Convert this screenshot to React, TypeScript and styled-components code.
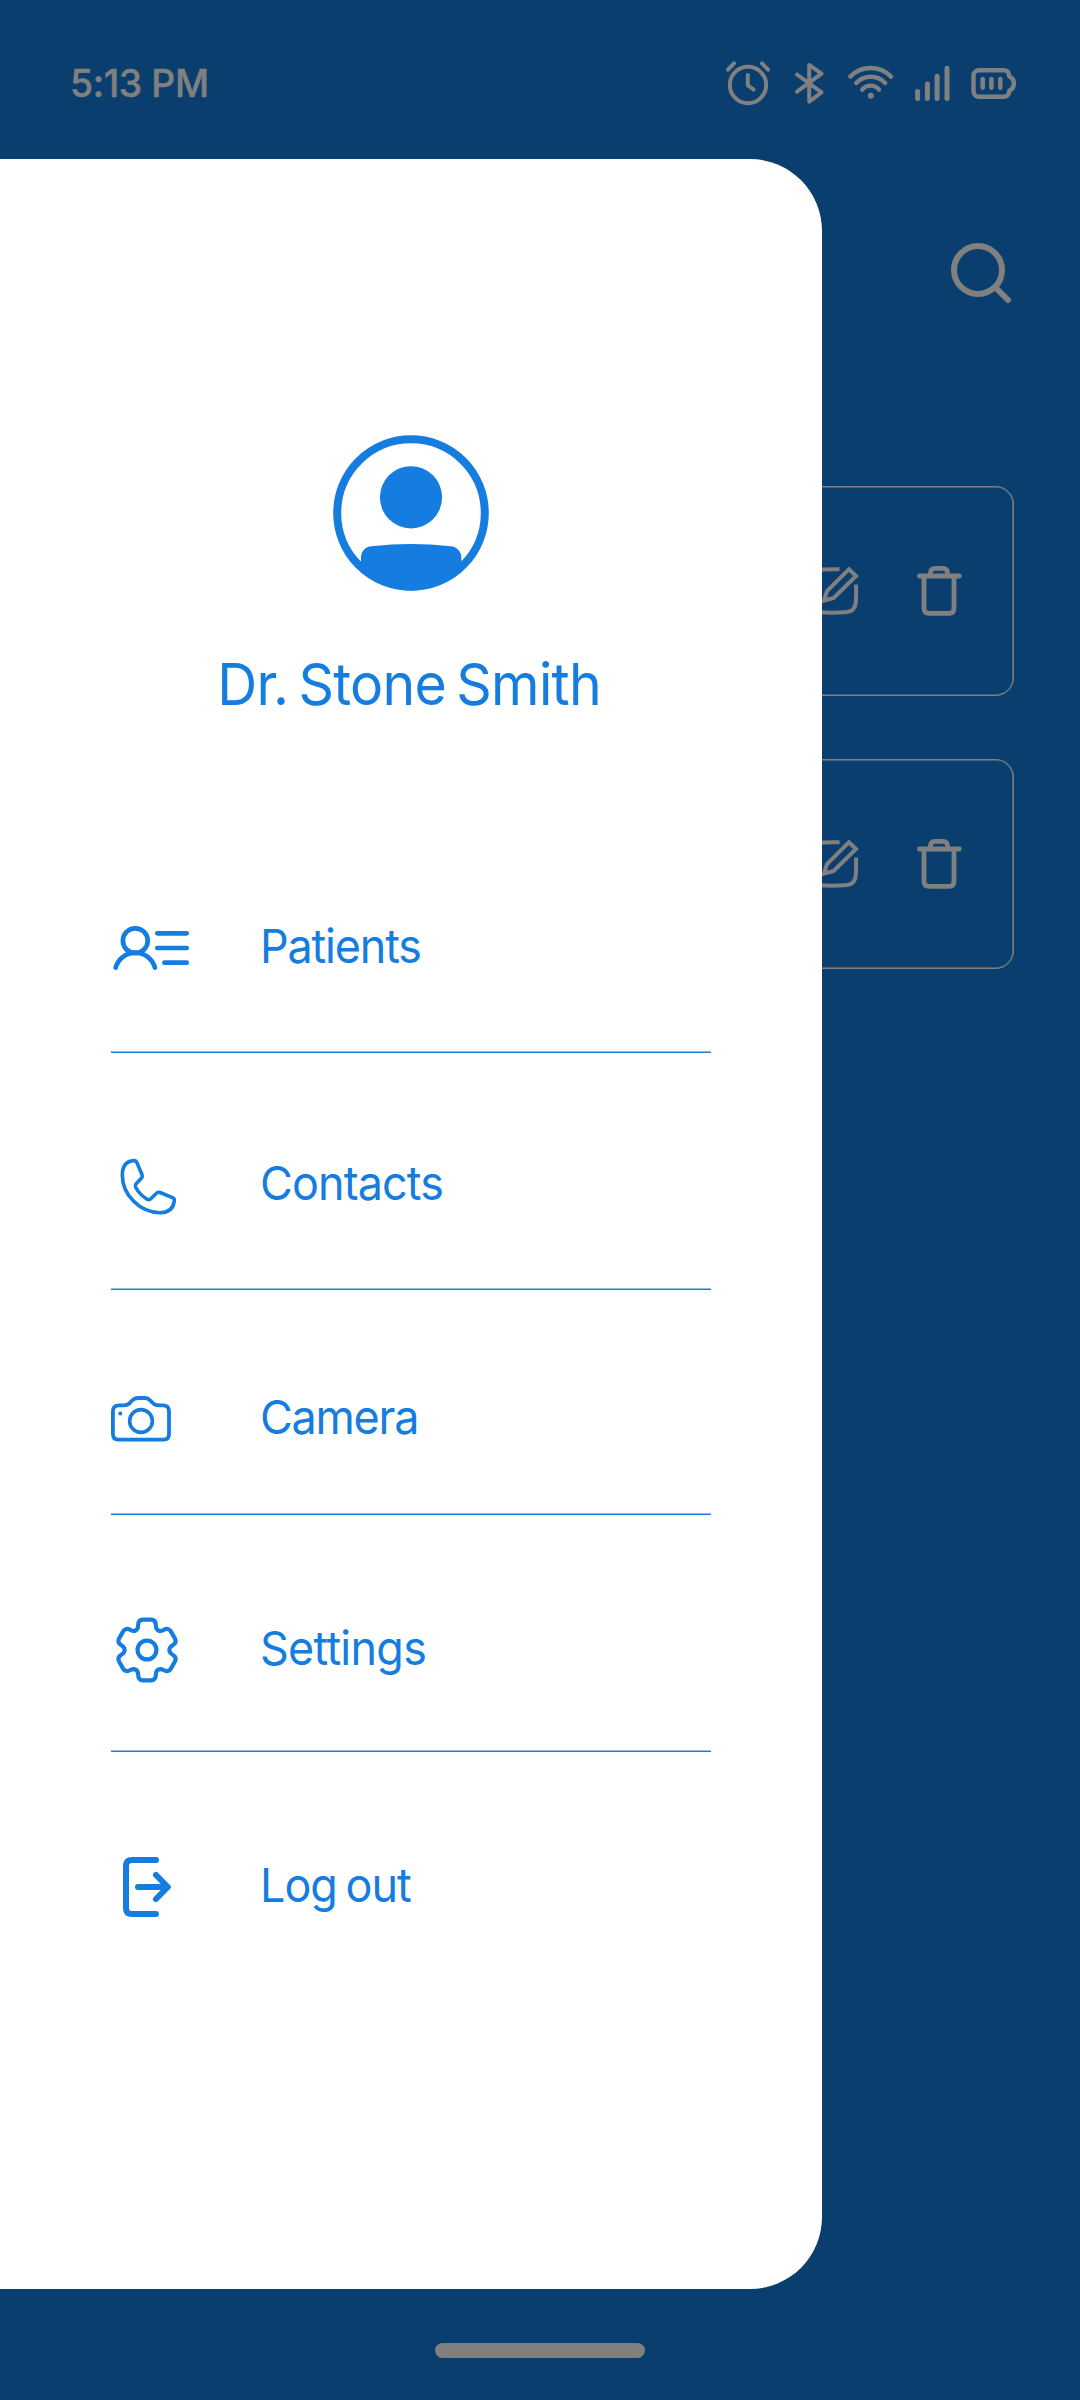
import React from "react";
import styled, { createGlobalStyle } from "styled-components";

const BLUE = "#157ce0";
const NAVY = "#0a3e6e";
const MUTED = "#808080";

const GlobalStyle = createGlobalStyle`
  * { box-sizing: border-box; }
  body { margin: 0; background: ${NAVY}; font-family: Inter, "Liberation Sans", sans-serif; }
`;

const Screen = styled.div`
  width: 1080px;
  height: 2400px;
  display: flex;
  flex-direction: column;
  background: ${NAVY};
  color: ${MUTED};
  overflow: hidden;
`;

const StatusBar = styled.header`
  height: 159px;
  padding: 59px 64px 0 70px;
  display: flex;
  justify-content: space-between;
  align-items: flex-start;
`;

const Clock = styled.time`
  font-size: 38.5px;
  font-weight: 500;
  line-height: 48px;
  letter-spacing: -0.4px;
  transform: scaleX(0.97);
  transform-origin: left;
  -webkit-text-stroke: 0.5px currentColor;
`;

const StatusIcons = styled.div`
  display: flex;
  gap: 13px;
`;

const Icon = styled.svg<{ $size: number; $stroke?: number }>`
  display: block;
  flex: none;
  width: ${(p) => p.$size}px;
  height: ${(p) => p.$size}px;
  overflow: visible;
  fill: none;
  stroke: currentColor;
  stroke-width: ${(p) => p.$stroke ?? 4};
  stroke-linecap: round;
  stroke-linejoin: round;
`;

const Main = styled.main`
  position: relative;
  flex: 1;
  padding: 81px 66px 0;
`;

const Toolbar = styled.div`
  display: flex;
  justify-content: flex-end;
  height: 246px;
`;

const CardList = styled.div`
  display: flex;
  flex-direction: column;
  gap: 63px;
`;

const Card = styled.article`
  height: 210px;
  padding-right: 44px;
  display: flex;
  align-items: center;
  justify-content: flex-end;
  gap: 47px;
  border: 1px solid ${MUTED};
  border-radius: 18px;
  box-shadow: inset 0 0 0 0.6px ${MUTED};
`;

const Drawer = styled.aside`
  position: absolute;
  inset: 0 auto 0 0;
  width: 822px;
  padding-top: 274px;
  background: #fff;
  color: ${BLUE};
  border-radius: 0 72px 72px 0;
`;

const Profile = styled.div`
  display: flex;
  flex-direction: column;
  align-items: center;
  gap: 56px;
  margin-bottom: 182px;
`;

const Name = styled.h1`
  margin: 0;
  padding-right: 5px;
  font-size: 58px;
  font-weight: 400;
  line-height: 70px;
  letter-spacing: -0.75px;
  word-spacing: -5px;
  white-space: nowrap;
  transform: scaleX(0.955);
`;

const Menu = styled.nav`
  width: 600px;
  margin-left: 111px;
`;

const MenuItem = styled.a<{ $top: number; $bottom: number }>`
  display: flex;
  align-items: center;
  gap: 59px;
  padding: ${(p) => p.$top}px 0 ${(p) => p.$bottom}px;
`;

const Divider = styled.hr`
  margin: 0;
  height: 2px;
  border: 0;
  border-top: 1px solid #8abdf0;
  border-bottom: 1px solid ${BLUE};
`;

const Label = styled.span<{ $spacing: number }>`
  font-size: 47px;
  line-height: 60px;
  letter-spacing: ${(p) => p.$spacing}px;
  word-spacing: -3px;
  white-space: nowrap;
  transform: scaleX(0.955);
  transform-origin: left;
`;

const NavBar = styled.footer`
  height: 111px;
  padding-top: 54px;
  display: flex;
  justify-content: center;
`;

const HomeIndicator = styled.div`
  width: 210px;
  height: 15px;
  border-radius: 8px;
  background: ${MUTED};
`;

const AlarmIcon = () => (
  <Icon $size={48} viewBox="724 59 48 48">
    <circle cx="748" cy="85" r="18.2" />
    <path d="M747.8 75V85.3L753.5 89.5M728 69.7L734 63.3M762 63.3L768 69.7" />
  </Icon>
);

const BluetoothIcon = () => (
  <Icon $size={48} viewBox="785 59 48 48">
    <path d="M797 74.5L821.6 92.3L809.2 101.6V65L821.6 73.7L797 91.7" />
  </Icon>
);

const WifiIcon = () => (
  <Icon $size={48} $stroke={4.4} viewBox="846 59 48 48">
    <path d="M850.3 76.6A28.5 28.5 0 0 1 891 76.6M856.2 83A20 20 0 0 1 885.2 83M862.2 89.6A10.8 10.8 0 0 1 879 89.6" />
    <circle cx="870.8" cy="95.7" r="3" fill="currentColor" stroke="none" />
  </Icon>
);

const SignalIcon = () => (
  <Icon $size={48} $stroke={5} viewBox="907 59 48 48">
    <path d="M917.6 91.6V98.4M927.4 83.9V98.4M937.1 76.3V98.4M947 68.3V98.4" />
  </Icon>
);

const BatteryIcon = () => (
  <Icon $size={48} $stroke={4.5} viewBox="968 59 48 48">
    <path d="M979 70.2h25a5 5 0 0 1 5 5c0 1.3 1 1.8 2 2.3c2 1 2.8 2.5 2.8 6s-.8 5-2.8 6c-1 .5-2 1-2 2.3a5 5 0 0 1-5 5h-25a5.5 5.5 0 0 1-5.5-5.5v-15.6a5.5 5.5 0 0 1 5.5-5.5z" />
    <path d="M982.7 79V87.8M991.4 79V87.8M1000.3 79V87.8" />
  </Icon>
);

const SearchIcon = () => (
  <Icon $size={66} $stroke={6} viewBox="948 240 66 66">
    <circle cx="978" cy="270" r="24" />
    <path d="M995.5 287.5L1008 300" />
  </Icon>
);

const EditIcon = () => (
  <Icon $size={60} viewBox="802 561 60 60">
    <path
      d="M839.5 569.3Q824 569 817 570.3Q809.5 571.5 808.6 580Q808 591 808.6 602Q809.5 611 817 612Q832 613.3 847 612Q855 611 855.8 602.5Q856.5 593 856 584.5"
      strokeLinecap="butt"
    />
    <path d="M824 600.6L827 591L849 569.2L856 576L833.7 598Z" strokeLinejoin="miter" />
  </Icon>
);

const TrashIcon = () => (
  <Icon $size={60} $stroke={4.8} viewBox="909 561 60 60">
    <path d="M919.4 576H959.3M924 577V608.3Q924 613.3 929 613.3H949Q954 613.3 954 608.3V577M930.4 575.5V573.5Q930.4 568.4 935 568.4H943Q947.6 568.4 947.6 573.5V575.5" />
  </Icon>
);

const AvatarIcon = () => (
  <Icon $size={160} viewBox="331 433 160 160">
    <circle cx="411" cy="513" r="73.8" strokeWidth="8" />
    <g fill="currentColor" stroke="none">
      <circle cx="411" cy="497.3" r="31.1" />
      <path d="M361 557.5C361 551 365.5 546.7 371.5 546.2Q411 541.8 450.5 546.2C456.5 546.7 461.3 551 461.3 557.5V572A77.5 77.5 0 0 1 361 572Z" />
    </g>
  </Icon>
);

const PatientsIcon = () => (
  <Icon $size={90} $stroke={4.7} viewBox="111 901 90 90">
    <circle cx="135.3" cy="940.7" r="12.4" />
    <path d="M115.7 967.7A20.3 20.3 0 0 1 154.9 967.7M157.3 933.3H186.7M157.3 948H186.7M164.4 962.7H186.7" />
  </Icon>
);

const PhoneIcon = () => (
  <Icon $size={90} $stroke={3.6} viewBox="111 1138 90 90">
    <path d="M122.3 1175C122.3 1165.5 127 1161 134 1160.6Q136 1160.5 136.6 1162L142 1174.5Q142.8 1176.5 141.5 1178L136 1184Q134.8 1185.5 135.5 1187Q139.5 1194.5 147 1199.2Q149 1200.3 150.5 1199L156.5 1193.3Q158 1191.8 160 1192.5L172.5 1197.7Q174.6 1198.6 174.3 1200.8C173.5 1208 169 1212.7 160 1212.7C140 1212.7 122.3 1195 122.3 1175Z" />
  </Icon>
);

const CameraIcon = () => (
  <Icon $size={90} $stroke={3.8} viewBox="111 1372 90 90">
    <path d="M119 1405.4H123.5Q127.5 1405.4 130 1402.7L132 1400.5Q134.5 1398 138 1398H145Q148 1398 150.3 1400.5L152.5 1402.8Q155 1405.4 158.8 1405.4H163Q169 1405.4 169 1411.5V1434Q169 1439.7 163.5 1439.7H118.5Q112.9 1439.7 112.9 1434V1411.5Q112.9 1405.4 119 1405.4Z" />
    <circle cx="141" cy="1421" r="11.4" strokeWidth="3.6" />
    <circle cx="120.3" cy="1413.4" r="2" fill="currentColor" stroke="none" />
  </Icon>
);

// One tooth pointing up, as curve points round the hub; the gear repeats it every 60 degrees.
const TOOTH: [number, number][] = [
  [-9.4, -20.8], [-9, -22.3], [-9, -24.5],
  [-9, -28.5], [-7, -30.3], [-4, -30.3],
  [-2, -30.3], [2, -30.3], [4, -30.3],
  [7, -30.3], [9, -28.5], [9, -24.5],
  [9, -22.3], [9.4, -20.8], [11.35, -19.66],
];

const gearPath = (() => {
  let d = "M-11.35 -19.66";
  for (let i = 0; i < 6; i++) {
    const a = (i * Math.PI) / 3;
    const pts = TOOTH.map(
      ([x, y]) =>
        `${(x * Math.cos(a) - y * Math.sin(a)).toFixed(2)} ${(x * Math.sin(a) + y * Math.cos(a)).toFixed(2)}`
    );
    for (let k = 0; k < pts.length; k += 3) d += `C${pts[k]} ${pts[k + 1]} ${pts[k + 2]}`;
  }
  return d + "Z";
})();

const SettingsIcon = () => (
  <Icon $size={90} $stroke={4.2} viewBox="-36 -47 90 90">
    <path d={gearPath} transform="scale(0.985 1)" />
    <circle cx="0" cy="0" r="9.4" />
  </Icon>
);

const LogoutIcon = () => (
  <Icon $size={90} $stroke={6} viewBox="111 1840 90 90">
    <path d="M156 1860H132Q126 1860 126 1866V1908Q126 1914 132 1914H156M138 1887H167.5M156 1875L167.8 1887L156 1899" />
  </Icon>
);

const ITEMS = [
  { label: "Patients", icon: PatientsIcon, top: 0, bottom: 60, spacing: -1.2 },
  { label: "Contacts", icon: PhoneIcon, top: 85, bottom: 60, spacing: -0.9 },
  { label: "Camera", icon: CameraIcon, top: 82, bottom: 51, spacing: -1.3 },
  { label: "Settings", icon: SettingsIcon, top: 88, bottom: 57, spacing: -0.75 },
  { label: "Log out", icon: LogoutIcon, top: 88, bottom: 0, spacing: -1.05 },
];

export default function App() {
  return (
    <Screen>
      <GlobalStyle />
      <StatusBar>
        <Clock>5:13 PM</Clock>
        <StatusIcons>
          <AlarmIcon />
          <BluetoothIcon />
          <WifiIcon />
          <SignalIcon />
          <BatteryIcon />
        </StatusIcons>
      </StatusBar>
      <Main>
        <Toolbar>
          <SearchIcon />
        </Toolbar>
        <CardList>
          {[0, 1].map((n) => (
            <Card key={n}>
              <EditIcon />
              <TrashIcon />
            </Card>
          ))}
        </CardList>
        <Drawer>
          <Profile>
            <AvatarIcon />
            <Name>Dr. Stone Smith</Name>
          </Profile>
          <Menu>
            {ITEMS.map(({ label, icon: Glyph, top, bottom, spacing }, i) => (
              <React.Fragment key={label}>
                <MenuItem $top={top} $bottom={bottom}>
                  <Glyph />
                  <Label $spacing={spacing}>{label}</Label>
                </MenuItem>
                {i < ITEMS.length - 1 && <Divider />}
              </React.Fragment>
            ))}
          </Menu>
        </Drawer>
      </Main>
      <NavBar>
        <HomeIndicator />
      </NavBar>
    </Screen>
  );
}
